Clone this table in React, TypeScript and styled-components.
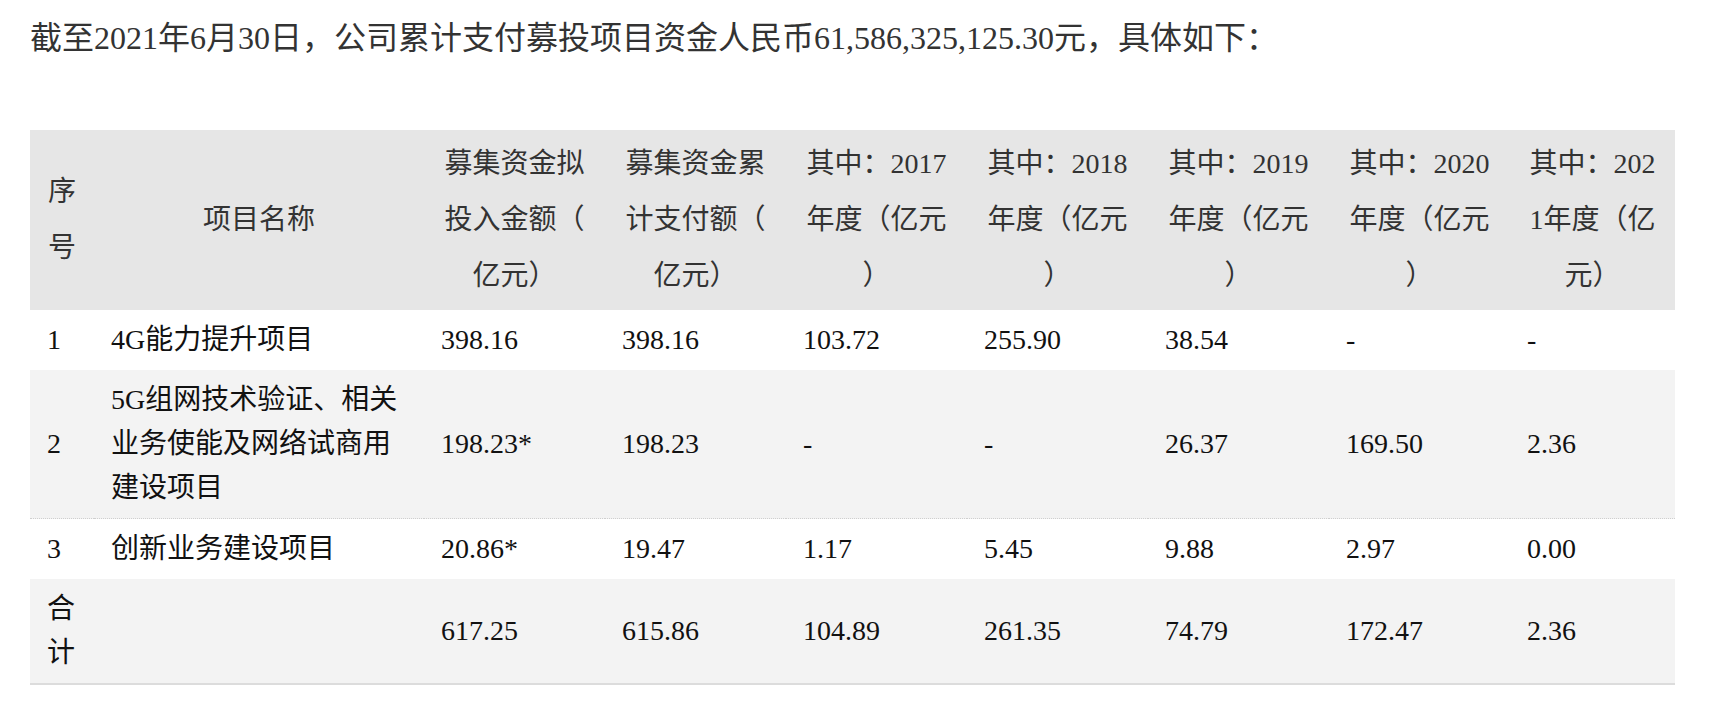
import styled, { createGlobalStyle } from 'styled-components';

interface IProjectRow {
  seq: string;
  name: string;
  values: string[];
}

const headers = [
  '募集资金拟投入金额（亿元）',
  '募集资金累计支付额（亿元）',
  '其中：2017年度（亿元）',
  '其中：2018年度（亿元）',
  '其中：2019年度（亿元）',
  '其中：2020年度（亿元）',
  '其中：2021年度（亿元）',
];

const rows: IProjectRow[] = [
  {
    seq: '1',
    name: '4G能力提升项目',
    values: ['398.16', '398.16', '103.72', '255.90', '38.54', '-', '-'],
  },
  {
    seq: '2',
    name: '5G组网技术验证、相关业务使能及网络试商用建设项目',
    values: ['198.23*', '198.23', '-', '-', '26.37', '169.50', '2.36'],
  },
  {
    seq: '3',
    name: '创新业务建设项目',
    values: ['20.86*', '19.47', '1.17', '5.45', '9.88', '2.97', '0.00'],
  },
  {
    seq: '合计',
    name: '',
    values: ['617.25', '615.86', '104.89', '261.35', '74.79', '172.47', '2.36'],
  },
];

export default function App() {
  return (
    <>
      <GlobalStyle />
      <Page>
        <Intro>截至2021年6月30日，公司累计支付募投项目资金人民币61,586,325,125.30元，具体如下：</Intro>
        <Table>
          <colgroup>
            <col width="64" />
            <col width="330" />
            {headers.map((h, i) => (
              <col key={h} width={i === headers.length - 1 ? 165 : 181} />
            ))}
          </colgroup>
          <thead>
            <tr>
              <HeadCell>序号</HeadCell>
              <HeadCell>项目名称</HeadCell>
              {headers.map((h) => (
                <HeadCell key={h}>{h}</HeadCell>
              ))}
            </tr>
          </thead>
          <tbody>
            {rows.map((row) => (
              <BodyRow key={row.seq}>
                <Cell>{row.seq}</Cell>
                <Cell>{row.name}</Cell>
                {row.values.map((v, i) => (
                  <Cell key={i}>{v}</Cell>
                ))}
              </BodyRow>
            ))}
          </tbody>
        </Table>
      </Page>
    </>
  );
}

const GlobalStyle = createGlobalStyle`
  body {
    margin: 0;
    background: #fff;
    font-family: "Liberation Serif", "Noto Sans CJK SC", serif;
  }
`;

const Page = styled.div`
  padding: 14px 43px 0 30px;
`;

const Intro = styled.p`
  margin: 0 0 68px;

  font-size: 32px;
  line-height: 48px;
  color: #333;
`;

const Table = styled.table`
  width: 1645px;
  table-layout: fixed;
  border-collapse: collapse;

  font-size: 28px;
  line-break: anywhere;
`;

const HeadCell = styled.th`
  padding: 6px 17px;

  font-weight: 400;
  line-height: 56px;
  text-align: center;
  vertical-align: middle;
  color: #333;
  background-color: #e6e6e6;
`;

const BodyRow = styled.tr`
  background-color: #fff;

  &:nth-child(even) {
    background-color: #f3f3f3;
  }

  &:nth-child(2) td {
    border-bottom: 1px dotted #cfcfcf;
  }

  &:last-child td {
    border-bottom: 2px solid #dcdcdc;
  }
`;

const Cell = styled.td`
  padding: 8px 17px;

  line-height: 44px;
  text-align: left;
  vertical-align: middle;
  color: #111;
`;
